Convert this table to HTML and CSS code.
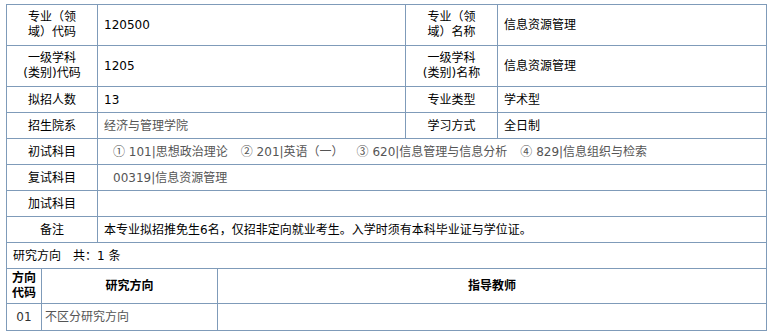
FILE: index.html
```html
<!DOCTYPE html>
<html lang="zh">
<head>
<meta charset="utf-8">
<link rel="stylesheet" href="styles.css">
</head>
<body>
<div class="page">
<table class="info">
  <colgroup><col class="c1"><col class="c2"><col class="c3"><col class="c4"></colgroup>
  <tr class="tall">
    <td class="lab">专业（领<br>域）代码</td><td class="val">120500</td>
    <td class="lab">专业（领<br>域）名称</td><td class="val">信息资源管理</td>
  </tr>
  <tr class="tall">
    <td class="lab">一级学科<br>(类别)代码</td><td class="val">1205</td>
    <td class="lab">一级学科<br>(类别)名称</td><td class="val">信息资源管理</td>
  </tr>
  <tr>
    <td class="lab">拟招人数</td><td class="val">13</td>
    <td class="lab">专业类型</td><td class="val">学术型</td>
  </tr>
  <tr>
    <td class="lab">招生院系</td><td class="val gray">经济与管理学院</td>
    <td class="lab">学习方式</td><td class="val">全日制</td>
  </tr>
  <tr>
    <td class="lab">初试科目</td>
    <td class="val gray subj" colspan="3"><span class="s"><span class="ci">①</span> 101|思想政治理论</span><span class="s"><span class="ci">②</span> 201|英语（一）</span><span class="s"><span class="ci">③</span> 620|信息管理与信息分析</span><span class="s"><span class="ci">④</span> 829|信息组织与检索</span></td>
  </tr>
  <tr>
    <td class="lab">复试科目</td>
    <td class="val gray subj" colspan="3">00319|信息资源管理</td>
  </tr>
  <tr>
    <td class="lab">加试科目</td>
    <td class="val" colspan="3"></td>
  </tr>
  <tr>
    <td class="lab">备注</td>
    <td class="val" colspan="3">本专业拟招推免生6名，仅招非定向就业考生。入学时须有本科毕业证与学位证。</td>
  </tr>
</table>
<table class="dir">
  <colgroup><col class="d1"><col class="d2"><col class="d3"></colgroup>
  <tr>
    <td class="count" colspan="3">研究方向　共：1 条</td>
  </tr>
  <tr class="head">
    <th>方向<br>代码</th><th>研究方向</th><th>指导教师</th>
  </tr>
  <tr>
    <td class="code">01</td><td class="name">不区分研究方向</td><td></td>
  </tr>
</table>
</div>
</body>
</html>
```
FILE: styles.css
```css
html, body { margin: 0; padding: 0; background: #fff; }
body {
  font-family: "DejaVu Sans", "Noto Sans CJK SC", sans-serif;
  font-size: 12px;
  color: #000;
}
.page { padding: 4px 0 0 6px; }
table {
  border-collapse: collapse;
  width: 760px;
  table-layout: fixed;
}
td, th {
  border: 1px solid #7f9bb9;
  padding: 0;
  height: 25px;
  line-height: 14px;
  vertical-align: middle;
}
.c1 { width: 91px; }
.c2 { width: 308px; }
.c3 { width: 92px; }
.c4 { width: 269px; }
.tall td { height: 40px; line-height: 15px; }
.lab { text-align: center; }
.val { padding-left: 6px; }
.gray { color: #555; }
.subj { padding-left: 15px; }
.s { margin-right: 13px; }
.ci { font-family: "Noto Sans CJK SC", sans-serif; }
.dir tr:first-child td { border-top: none; }
.d1 { width: 35px; }
.d2 { width: 176px; }
.d3 { width: 549px; }
.count { padding-left: 6px; }
.head th { height: 34px; font-weight: bold; text-align: center; font-size: 12px; line-height: 15px; color: #000; }
.code { text-align: center; color: #333; height: 26px; }
.name { color: #555; padding-left: 3px; }
```
